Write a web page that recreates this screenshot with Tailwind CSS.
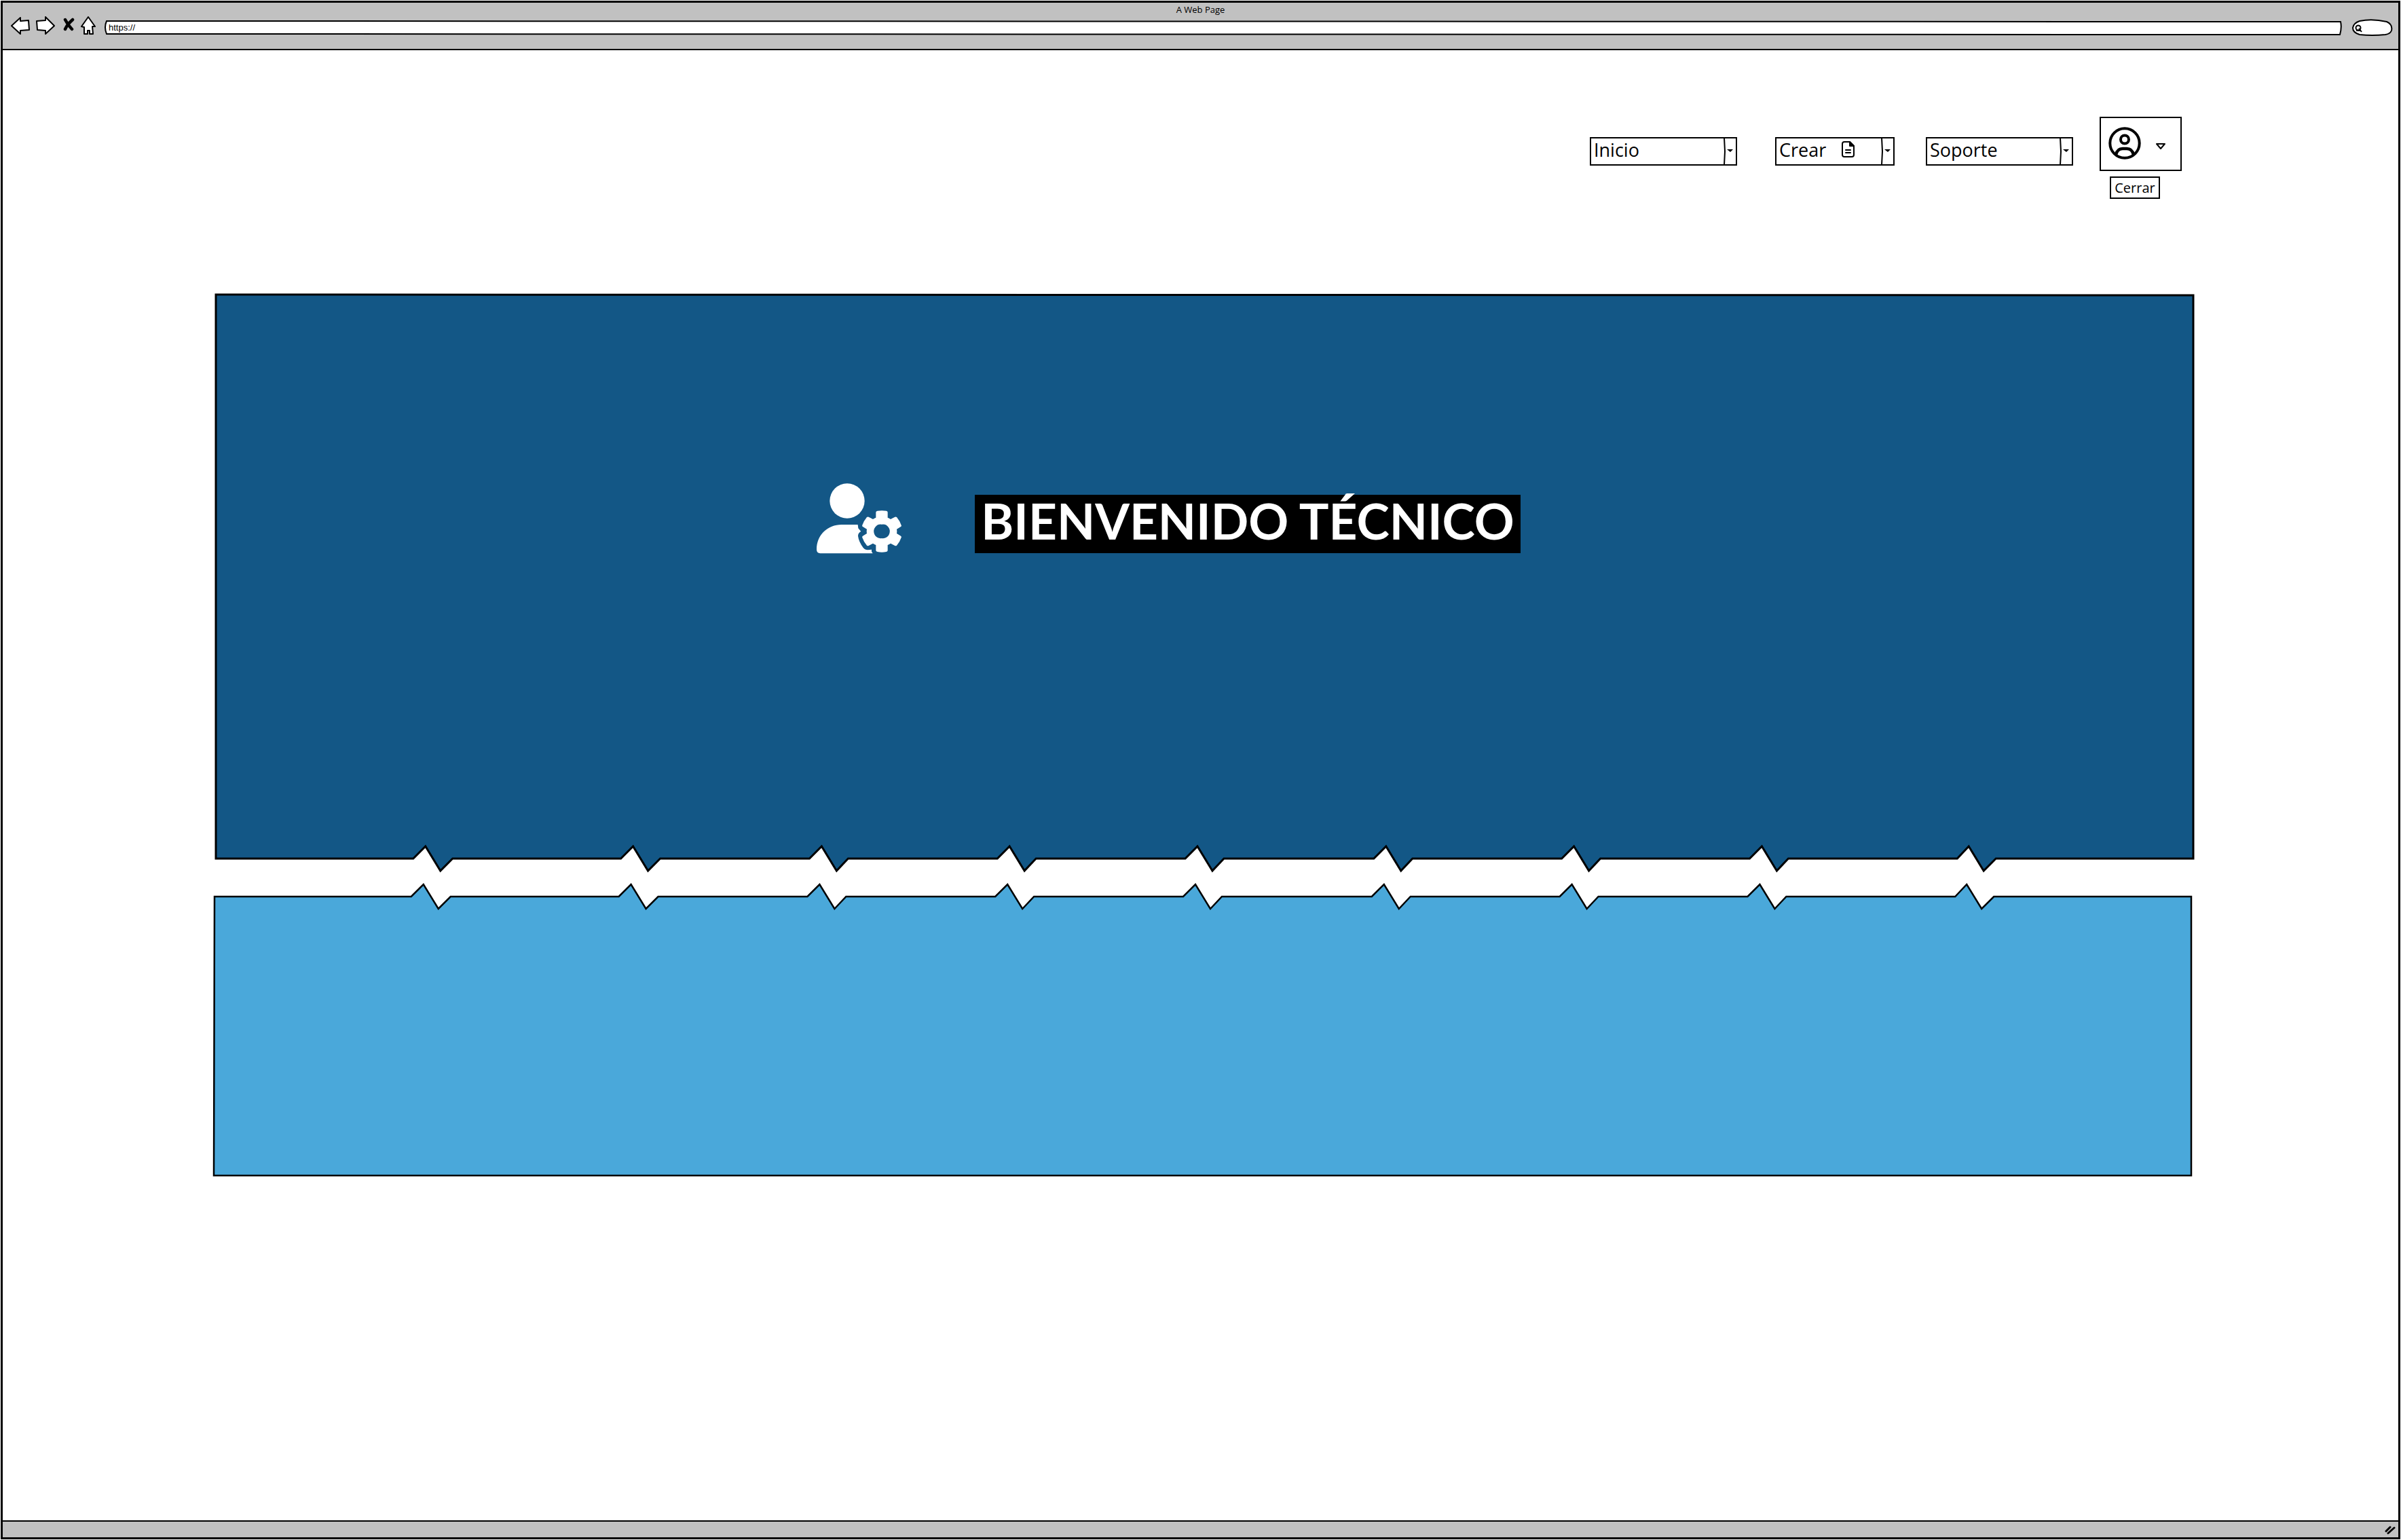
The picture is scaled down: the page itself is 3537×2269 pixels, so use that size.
<!DOCTYPE html>
<html lang="es">
<head>
<meta charset="utf-8">
<title>A Web Page</title>
<script src="https://cdn.jsdelivr.net/npm/@tailwindcss/browser@4"></script>
</head>
<body class="bg-white font-['Open_Sans',sans-serif] text-black">
<div class="flex min-h-screen flex-col p-px">
  <div class="flex grow flex-col border-3 border-black">
    <!-- Browser bar -->
    <header class="h-[70px] border-b-2 border-black bg-[#c1c1c1]">
      <p class="pt-[2px] text-center text-[13px] leading-4">A Web Page</p>
      <div class="flex items-center pr-2 pl-3">
        <div class="flex shrink-0 items-center gap-[9px]">
          <button type="button" aria-label="Atrás"><svg class="block h-7 w-7" viewBox="0 0 28 28" fill="#fff" stroke="#000" stroke-width="2" stroke-linejoin="round"><path d="M1 14 14 2V7L26 6 27 20 14 21V26Z"/></svg></button>
          <button type="button" aria-label="Adelante"><svg class="block h-7 w-7" viewBox="0 0 28 28" fill="#fff" stroke="#000" stroke-width="2" stroke-linejoin="round"><path d="M27 14 14 1V6L1 7 2 20 14 21V26Z"/></svg></button>
          <button type="button" aria-label="Detener"><svg class="block h-7 w-5" viewBox="0 0 20 28" fill="none" stroke="#000" stroke-width="4.5" stroke-linecap="round"><path d="M6 5Q10 13 16 19M17 5Q9 12 6 19"/></svg></button>
          <button type="button" aria-label="Inicio"><svg class="block h-7 w-6" viewBox="0 0 24 28" fill="#fff" stroke="#000" stroke-width="2" stroke-linejoin="round"><path d="M11 1 21 15H17L18 26H13V21H10V26H5V16L1 15Z"/></svg></button>
        </div>
        <div class="relative mt-[6px] ml-[11px] h-[22px] grow">
          <svg class="absolute inset-0 h-full w-full overflow-visible" viewBox="0 0 3296 22" preserveAspectRatio="none" fill="#fff" stroke="#000" stroke-width="2"><path vector-effect="non-scaling-stroke" d="M3 1 3294 2Q3296 10 3293 21L3 20Q-1 10 3 1Z"/></svg>
          <input aria-label="Dirección" value="https://" class="relative block h-full w-full bg-transparent px-[6px] font-['Liberation_Sans',sans-serif] text-[13px] leading-5 outline-none">
        </div>
        <div class="relative mt-[6px] ml-[14px] h-[25px] w-[61px] shrink-0">
          <svg class="absolute inset-0 h-full w-full" viewBox="0 0 61 25" fill="#fff" stroke="#000" stroke-width="2"><path d="M12 3Q30-1 52 4 61 8 59 17 57 22 50 23 30 25 12 23 2 20 2 13 3 6 12 3Z"/><circle cx="10" cy="13" r="3.5"/><path d="M11 14 15 19M7 17H14"/></svg>
          <input type="search" aria-label="Buscar" class="relative block h-full w-full bg-transparent pl-5 text-[13px] outline-none">
        </div>
      </div>
    </header>

    <main class="grow pr-[302px] pl-[311px]">
      <nav class="flex items-start justify-end pt-[98px] pr-[17px]">
        <div class="relative mt-[30px] mr-14 h-[42px] w-[217px]">
          <select aria-label="Inicio" class="block h-full w-full appearance-none border-2 border-black bg-white pb-1 pl-1 text-[27px] leading-8"><option>Inicio</option></select>
          <svg class="pointer-events-none absolute inset-y-0 right-0 h-full w-5" viewBox="0 0 20 42"><path d="M1 1 2 21 1 41" fill="none" stroke="#000" stroke-width="2"/><path d="M5 18H14L10 22Z"/></svg>
        </div>
        <div class="relative mt-[30px] mr-[46px] h-[42px] w-[176px]">
          <select aria-label="Crear" class="block h-full w-full appearance-none border-2 border-black bg-white pb-1 pl-1 text-[27px] leading-8"><option>Crear</option></select>
          <svg class="pointer-events-none absolute top-[5px] left-[98px] h-[26px] w-[19px]" viewBox="0 0 19 26" fill="none" stroke="#000" stroke-width="2" stroke-linecap="round" stroke-linejoin="round"><path d="M4 2H12L18 8V21Q18 24 15 24H4Q1 24 1 21V5Q1 2 4 2ZM6 14H13M6 18H13"/><path d="M12 2V8H18Z" fill="#000"/></svg>
          <svg class="pointer-events-none absolute inset-y-0 right-0 h-full w-5" viewBox="0 0 20 42"><path d="M1 1 2 21 1 41" fill="none" stroke="#000" stroke-width="2"/><path d="M5 18H14L10 22Z"/></svg>
        </div>
        <div class="relative mt-[30px] mr-[39px] h-[42px] w-[217px]">
          <select aria-label="Soporte" class="block h-full w-full appearance-none border-2 border-black bg-white pb-1 pl-1 text-[27px] leading-8"><option>Soporte</option></select>
          <svg class="pointer-events-none absolute inset-y-0 right-0 h-full w-5" viewBox="0 0 20 42"><path d="M1 1 2 21 1 41" fill="none" stroke="#000" stroke-width="2"/><path d="M5 18H14L10 22Z"/></svg>
        </div>
        <div class="flex w-[121px] flex-col gap-2">
          <button type="button" aria-label="Cuenta" class="flex h-20 items-center border-2 border-black pl-[11px]">
            <svg class="mb-[2px] h-12 w-12" viewBox="0 0 48 48" fill="none" stroke="#000" stroke-width="4"><circle cx="24" cy="24" r="21.7"/><circle cx="24" cy="18.500" r="6"/><path d="M11 41Q13 32 21 32H27Q35 32 37 41" stroke-width="4.500"/></svg>
            <svg class="mt-2 ml-[21px] h-3 w-4" viewBox="0 0 16 12" fill="#fff" stroke="#000" stroke-width="2" stroke-linejoin="round"><path d="M2 2H14L8 9Z"/></svg>
          </button>
          <button type="button" class="ml-[15px] h-[33px] w-[74px] border-2 border-black text-[20px] leading-6">Cerrar</button>
        </div>
      </nav>

      <!-- Hero with a torn lower edge -->
      <section class="relative mt-[141px] ml-[3px] h-[831px]">
        <svg class="absolute inset-0 h-full w-full overflow-visible" viewBox="0 0 2915 831" preserveAspectRatio="none" fill="#135786" stroke="#000" stroke-width="3"><path vector-effect="non-scaling-stroke" d="M0 0 2915 1V831H2624L2606 849 2584 813 2567 831H2318L2301 849 2279 813 2261 831H2041L2024 849 2002 813 1984 831H1764L1747 849 1725 813 1707 831H1486L1469 849 1447 813 1429 831H1209L1192 849 1170 813 1152 831H932L915 849 893 813 875 831H655L637 849 615 813 597 831H349L331 849 309 813 291 831H0Z"/></svg>
        <div class="relative flex items-start pt-[278px] pl-[885px]">
          <svg class="h-[104px] w-[125px] shrink-0" viewBox="66 67 375 312" fill="#fff"><circle cx="201" cy="145" r="77"/><path d="M176 250H248L250 266 262 280Q249 287 249 300 252 325 272 352 280 362 292 362L309 360V369L314 377H82Q66 375 66 360C66 295 115 250 176 250Z"/><path fill-rule="evenodd" d="M328 195Q328 190 335 189 354 186 374 189 380 190 380 195V219Q387 222 393 226L412 216Q416 214 420 217 434 234 440 252 442 257 438 259L420 270Q422 280 420 289L438 300Q442 303 440 307 434 326 420 342 416 345 412 343L393 333Q387 337 380 340V364Q380 369 374 370 354 374 335 370 328 369 328 364V340Q321 337 315 333L296 343Q292 345 288 342 274 326 268 307 266 303 270 300L288 289Q286 280 288 270L270 259Q266 257 268 252 274 234 288 217 292 214 296 216L315 226Q321 222 328 219ZM354 249A30 31 0 1 0 354 310 30 31 0 1 0 354 249Z"/></svg>
          <h1 class="mt-[17px] ml-[108px] h-[86px] w-[804px] bg-black text-center font-['Lato',sans-serif] text-[73px] leading-[76px] font-bold whitespace-nowrap text-white">BIENVENIDO TÉCNICO</h1>
        </div>
      </section>

      <section class="relative mt-14 mr-[3px] h-[411px]" aria-label="Contenido">
        <svg class="absolute inset-0 h-full w-full overflow-visible" viewBox="0 0 2915 411" preserveAspectRatio="none" fill="#4aa8da" stroke="#000" stroke-width="2.500"><path vector-effect="non-scaling-stroke" d="M1 0H291L309-18 331 18 349 0H597L615-18 637 18 655 0H875L893-18 915 18 932 0H1152L1170-18 1192 18 1209 0H1429L1447-18 1469 18 1486 0H1707L1725-18 1747 18 1764 0H1984L2002-18 2024 18 2041 0H2261L2279-18 2301 18 2318 0H2567L2584-18 2606 18 2624 0H2915V411H0Z"/></svg>
      </section>
    </main>

    <footer class="flex h-[25px] items-center justify-end border-t-2 border-black bg-[#c1c1c1] pr-1">
      <svg class="h-4 w-4" viewBox="0 0 16 16" stroke="#000" stroke-width="3" stroke-linecap="round"><path d="M2 10 8 4M5 13 14 5"/></svg>
    </footer>
  </div>
</div>
</body>
</html>
